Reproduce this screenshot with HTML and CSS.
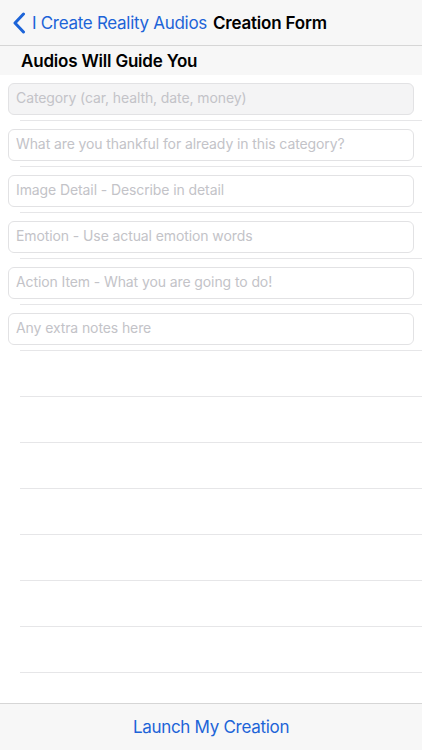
FILE: index.html
```html
<!DOCTYPE html>
<html lang="en">
<head>
    <meta charset="UTF-8">
    <meta name="viewport" content="width=device-width, initial-scale=1.0">
    <title>Creation Form</title>
    <link rel="stylesheet" href="styles.css">
</head>
<body>
    <header class="nav-bar">
        <a class="back-link" href="#">
            <svg class="back-chevron" width="14" height="22" viewBox="0 0 14 22">
                <path d="M11.5 2 L3 11 L11.5 20" fill="none" stroke="currentColor" stroke-width="3" stroke-linecap="round" stroke-linejoin="round"/>
            </svg>
            <span>I Create Reality Audios</span>
        </a>
        <h1 class="nav-title">Creation Form</h1>
    </header>

    <div class="section-header">Audios Will Guide You</div>

    <main class="form-list">
        <div class="form-row"><input class="field field-first" type="text" placeholder="Category (car, health, date, money)"></div>
        <div class="form-row"><input class="field" type="text" placeholder="What are you thankful for already in this category?"></div>
        <div class="form-row"><input class="field" type="text" placeholder="Image Detail - Describe in detail"></div>
        <div class="form-row"><input class="field" type="text" placeholder="Emotion - Use actual emotion words"></div>
        <div class="form-row"><input class="field" type="text" placeholder="Action Item - What you are going to do!"></div>
        <div class="form-row"><input class="field" type="text" placeholder="Any extra notes here"></div>
        <div class="form-row"></div>
        <div class="form-row"></div>
        <div class="form-row"></div>
        <div class="form-row"></div>
        <div class="form-row"></div>
        <div class="form-row"></div>
        <div class="form-row"></div>
        <div class="form-row"></div>
    </main>

    <footer class="toolbar">
        <button class="launch-button" type="button">Launch My Creation</button>
    </footer>
</body>
</html>
```

FILE: styles.css
```css
/* Basic page setup */
body {
    font-family: Inter, "Liberation Sans", Arial, sans-serif;
    margin: 0;
    padding: 0;
    height: 750px;
    display: flex;
    flex-direction: column;
    background-color: #fff;
    color: #000;
    overflow: hidden;
}

.nav-bar {
    height: 46px;
    box-sizing: border-box;
    background-color: #f7f7f7;
    border-bottom: 1px solid #d6d6d6;
    display: flex;
    align-items: center;
    padding-left: 12px;
    flex-shrink: 0;
}

.back-link {
    display: flex;
    align-items: center;
    gap: 6px;
    color: #1d64d8;
    text-decoration: none;
    font-size: 17px;
    letter-spacing: -0.3px;
}

.back-chevron {
    display: block;
}

.nav-title {
    margin: 0 0 0 6px;
    font-size: 17px;
    font-weight: 600;
    letter-spacing: -0.2px;
}

.section-header {
    height: 29px;
    box-sizing: border-box;
    background-color: #f7f7f7;
    padding-left: 21px;
    font-size: 17px;
    font-weight: 600;
    letter-spacing: -0.2px;
    line-height: 31px;
    flex-shrink: 0;
}

.form-list {
    flex-grow: 1;
    overflow: hidden;
}

.form-row {
    height: 46px;
    box-sizing: border-box;
    padding: 8px 8px 0 8px;
    position: relative;
}

.form-row::after {
    content: "";
    position: absolute;
    left: 20px;
    right: 0;
    bottom: 0;
    border-bottom: 1px solid #e6e6e8;
}

.field {
    display: block;
    width: 100%;
    height: 32px;
    box-sizing: border-box;
    border: 1px solid #e2e2e4;
    border-radius: 6px;
    padding: 0 7px 3px 7px;
    font-family: inherit;
    font-size: 14px;
    letter-spacing: -0.1px;
    background-color: #fff;
    outline: none;
}

.field::placeholder {
    color: #c3c3c8;
}

.field-first {
    background-color: #f4f4f5;
}

.toolbar {
    height: 47px;
    box-sizing: border-box;
    background-color: #f7f7f7;
    border-top: 1px solid #d6d6d6;
    display: flex;
    justify-content: center;
    align-items: center;
    flex-shrink: 0;
}

.launch-button {
    background: none;
    border: none;
    font-family: inherit;
    font-size: 17px;
    letter-spacing: -0.3px;
    color: #1d64d8;
    padding: 0;
    cursor: pointer;
}
```
